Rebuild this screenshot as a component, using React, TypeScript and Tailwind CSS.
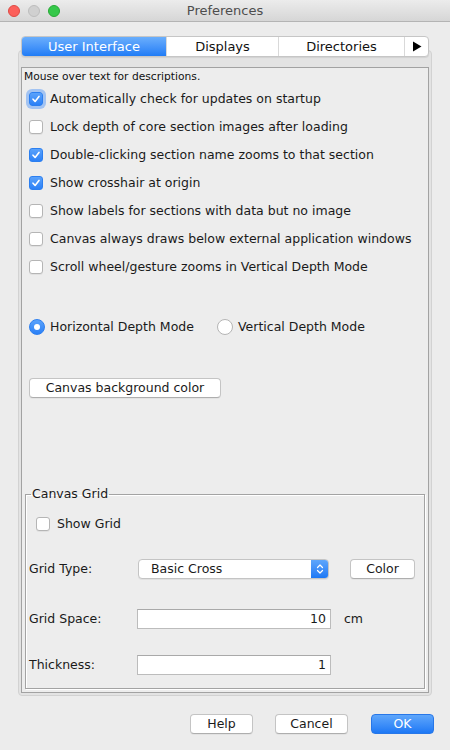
import React from 'react';

const font = "font-['DejaVu_Sans',sans-serif]";

const Check: React.FC<{ checked?: boolean; focus?: boolean }> = ({ checked, focus }) =>
  checked ? (
    <div
      className={`w-[14px] h-[14px] rounded-[3px] bg-gradient-to-b from-[#5aa2fb] to-[#2a80f6] border border-[#2c7ff0] flex items-center justify-center shrink-0 ${
        focus ? 'shadow-[0_0_0_3px_rgba(100,160,245,0.55)]' : ''
      }`}
    >
      <svg width="10" height="10" viewBox="0 0 10 10">
        <path d="M2 5.2 L4.1 7.4 L8 2.4" fill="none" stroke="#fff" strokeWidth="1.6" strokeLinecap="round" strokeLinejoin="round" />
      </svg>
    </div>
  ) : (
    <div className="w-[14px] h-[14px] rounded-[3px] bg-white border border-[#b5b5b5] shadow-[0_1px_0_rgba(0,0,0,0.05)] shrink-0" />
  );

const Radio: React.FC<{ on?: boolean }> = ({ on }) =>
  on ? (
    <div className="w-[16px] h-[16px] rounded-full bg-gradient-to-b from-[#5aa2fb] to-[#2a80f6] border border-[#2c7ff0] flex items-center justify-center shrink-0">
      <div className="w-[6px] h-[6px] rounded-full bg-white" />
    </div>
  ) : (
    <div className="w-[16px] h-[16px] rounded-full bg-white border border-[#b5b5b5] shrink-0" />
  );

const Btn: React.FC<{ label: string; w: string; primary?: boolean }> = ({ label, w, primary }) => (
  <div
    className={`${w} h-[20px] rounded-[4px] flex items-center justify-center text-[12.5px] ${
      primary
        ? 'bg-gradient-to-b from-[#5ea6fb] to-[#1c78f5] border border-[#2877e8] text-white'
        : 'bg-white border border-[#c4c4c4] border-b-[#aeaeae] text-[#1a1a1a] shadow-[0_1px_0_rgba(0,0,0,0.04)]'
    }`}
  >
    {label}
  </div>
);

const Field: React.FC<{ value: string }> = ({ value }) => (
  <div className="w-[194px] h-[20px] bg-white border border-[#bcbcbc] border-t-[#a9a9a9] flex items-center justify-end pr-[4px] text-[12.5px] text-[#1a1a1a]">
    {value}
  </div>
);

const options = [
  { label: 'Automatically check for updates on startup', checked: true, focus: true },
  { label: 'Lock depth of core section images after loading', checked: false },
  { label: 'Double-clicking section name zooms to that section', checked: true },
  { label: 'Show crosshair at origin', checked: true },
  { label: 'Show labels for sections with data but no image', checked: false },
  { label: 'Canvas always draws below external application windows', checked: false },
  { label: 'Scroll wheel/gesture zooms in Vertical Depth Mode', checked: false },
];

const tabs = [
  { label: 'User Interface', w: 'w-[144px]' },
  { label: 'Displays', w: 'w-[112px]' },
  { label: 'Directories', w: 'w-[126px]' },
];

export default function App() {
  return (
    <div className={`w-[450px] h-[750px] bg-[#ececec] flex flex-col text-[#1a1a1a] ${font}`}>
      {/* title bar */}
      <div className="h-[22px] shrink-0 bg-gradient-to-b from-[#ececec] to-[#d6d6d6] border-b border-[#b4b4b4] flex items-center relative">
        <div className="flex items-center gap-[8px] pl-[8px]">
          <div className="w-[12px] h-[12px] rounded-full bg-[#fc605b] border border-[#de4a44]" />
          <div className="w-[12px] h-[12px] rounded-full bg-[#d0d0d0] border border-[#bdbdbd]" />
          <div className="w-[12px] h-[12px] rounded-full bg-[#35c84a] border border-[#27a935]" />
        </div>
        <div className="absolute inset-0 flex items-center justify-center text-[13px] text-[#4d4d4d] pointer-events-none">
          Preferences
        </div>
      </div>

      <div className="flex-1 flex flex-col px-[18px] pt-[14px]">
        {/* tabs */}
        <div className="relative z-10 mx-[3px] h-[21px] flex rounded-[4px] border border-[#c6c6c6] bg-white shadow-[0_1px_1px_rgba(0,0,0,0.08)] overflow-hidden text-[13px]">
          {tabs.map((t, i) => (
            <div
              key={t.label}
              className={`${t.w} h-full flex items-center justify-center ${
                i === 0
                  ? 'bg-gradient-to-b from-[#6aaefc] to-[#1f7cf6] text-white'
                  : 'border-l border-[#d9d9d9] text-[#111]'
              }`}
            >
              {t.label}
            </div>
          ))}
          <div className="flex-1 h-full flex items-center justify-center border-l border-[#d9d9d9]">
            <svg width="10" height="11" viewBox="0 0 10 11">
              <path d="M1 0.5 L9.5 5.5 L1 10.5 Z" fill="#000" />
            </svg>
          </div>
        </div>

        {/* tab pane */}
        <div className="-mt-[7px] flex-1 flex flex-col rounded-[4px] border border-[#d2d2d2] bg-[#e3e3e3] pt-[16px] px-[2px] pb-[2px]">
          <div className="flex-1 flex flex-col border border-[#a2a2a2] bg-[#ededed]">
            <div className="h-[17px] pl-[2px] leading-[17px] text-[10.7px] text-[#111]">
              Mouse over text for descriptions.
            </div>
            {options.map((o) => (
              <div key={o.label} className="h-[28px] flex items-center gap-[7px] pl-[7px] text-[12.5px]">
                <Check checked={o.checked} focus={o.focus} />
                <span>{o.label}</span>
              </div>
            ))}

            <div className="mt-[32px] h-[28px] flex items-center pl-[7px] text-[12.5px]">
              <div className="w-[188px] flex items-center gap-[5px]">
                <Radio on />
                <span>Horizontal Depth Mode</span>
              </div>
              <div className="flex items-center gap-[5px]">
                <Radio />
                <span>Vertical Depth Mode</span>
              </div>
            </div>

            <div className="mt-[37px] pl-[7px]">
              <Btn label="Canvas background color" w="w-[192px]" />
            </div>

            {/* canvas grid */}
            <fieldset className="mt-auto mx-[3px] mb-[3px] border border-[#a3a3a3] shadow-[1px_1px_0_#fff,inset_1px_1px_0_#fff] pb-[13px]">
              <legend className="ml-[5px] px-[1px] text-[12.5px] leading-[14px]">Canvas Grid</legend>
              <div className="mt-[9px] h-[28px] flex items-center gap-[7px] pl-[10px] text-[12.5px]">
                <Check />
                <span>Show Grid</span>
              </div>
              <div className="mt-[21px] h-[20px] flex items-center pl-[3px] text-[12.5px]">
                <span className="w-[109px]">Grid Type:</span>
                <div className="w-[191px] h-[20px] flex rounded-[4px] border border-[#c4c4c4] bg-white overflow-hidden shadow-[0_1px_0_rgba(0,0,0,0.05)]">
                  <div className="flex-1 flex items-center pl-[12px]">Basic Cross</div>
                  <div className="w-[17px] h-full bg-gradient-to-b from-[#5ea6fb] to-[#1c78f5] flex items-center justify-center">
                    <svg width="8" height="12" viewBox="0 0 8 12">
                      <path d="M1.5 4.5 L4 2 L6.5 4.5 M1.5 7.5 L4 10 L6.5 7.5" fill="none" stroke="#fff" strokeWidth="1.2" strokeLinecap="round" strokeLinejoin="round" />
                    </svg>
                  </div>
                </div>
                <div className="ml-[21px]">
                  <Btn label="Color" w="w-[65px]" />
                </div>
              </div>
              <div className="mt-[30px] h-[20px] flex items-center pl-[3px] text-[12.5px]">
                <span className="w-[108px]">Grid Space:</span>
                <Field value="10" />
                <span className="ml-[13px]">cm</span>
              </div>
              <div className="mt-[26px] h-[20px] flex items-center pl-[3px] text-[12.5px]">
                <span className="w-[108px]">Thickness:</span>
                <Field value="1" />
              </div>
            </fieldset>
          </div>
        </div>
      </div>

      {/* dialog buttons */}
      <div className="h-[54px] shrink-0 flex items-start justify-end pt-[18px] pr-[16px]">
        <Btn label="Help" w="w-[63px]" />
        <div className="ml-[22px]">
          <Btn label="Cancel" w="w-[73px]" />
        </div>
        <div className="ml-[23px]">
          <Btn label="OK" w="w-[63px]" primary />
        </div>
      </div>
    </div>
  );
}
